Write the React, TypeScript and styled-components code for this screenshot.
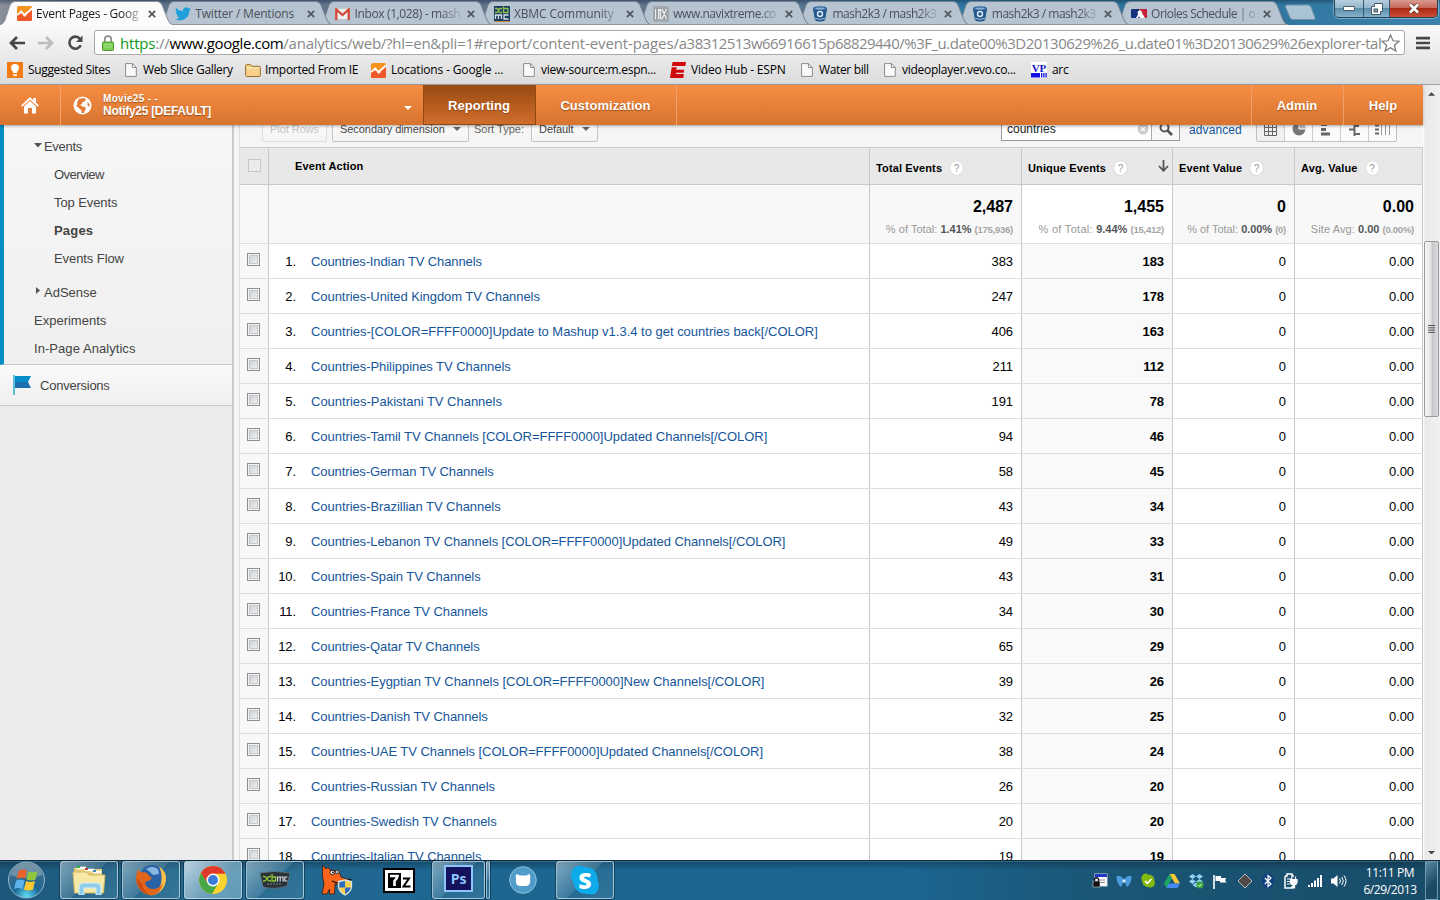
import React from "react";
import styled, { createGlobalStyle, css } from "styled-components";

const ui = `"Open Sans", "Noto Sans", sans-serif`;
const arial = `"Liberation Sans", Arial, sans-serif`;

const GlobalStyle = createGlobalStyle`
  * { box-sizing: border-box; }
  body { margin: 0; overflow: hidden; font-family: ${arial}; font-size: 13px; color: #000; }
  svg { display: block; flex: none; }
`;

const Desktop = styled.div`
  width: 1440px;
  height: 900px;
  display: flex;
  flex-direction: column;
  overflow: hidden;
  background: #fff;
`;

/* ---------- browser frame ---------- */

const TitleBar = styled.header`
  height: 25px;
  display: flex;
  flex: none;
  background:
    linear-gradient(180deg, rgba(20, 40, 70, 0.45), rgba(20, 40, 70, 0) 5px),
    linear-gradient(90deg, #8a8f99 0, #60748c 60px, #60748c 780px, #2f7aa5 900px, #2a729c 1200px, #3b83ab 1440px);
`;

const TabBox = styled.div<{ $z: number; $active?: boolean }>`
  position: relative;
  z-index: ${(p) => p.$z};
  width: 159.3px;
  flex: none;
  display: flex;
  align-items: center;
  padding: 2px 0 0 16px;
  color: ${(p) => (p.$active ? "#1a1a1a" : "#4a5058")};
`;

const TabShape = styled.svg`
  position: absolute;
  left: 0;
  top: 0;
`;

const TabIcon = styled.span`
  position: relative;
  width: 16px;
  display: flex;
  justify-content: center;
`;

const TabLabel = styled.span<{ $ls?: number; $fade?: boolean }>`
  position: relative;
  width: 107px;
  margin-left: 4px;
  overflow: hidden;
  white-space: nowrap;
  font: 12px/18px ${ui};
  letter-spacing: ${(p) => p.$ls ?? -0.2}px;
  ${(p) => p.$fade && css`mask-image: linear-gradient(90deg, #000 86px, rgba(0, 0, 0, 0.2) 105px);`}
`;

const CloseMark = styled.svg`
  position: relative;
  margin-left: 5px;
`;

const NewTab = styled.svg`
  margin: 4px 0 0 10px;
`;

const WindowButtons = styled.div`
  display: flex;
  width: 104px;
  height: 18px;
  margin-left: auto;
  margin-right: 2px;
  border: 1px solid #22415a;
  border-top: 0;
  border-radius: 0 0 5px 5px;
  overflow: hidden;
  box-shadow: 0 0 0 1px rgba(255, 255, 255, 0.35);
`;

const WindowButton = styled.div<{ $w: number; $close?: boolean }>`
  width: ${(p) => p.$w}px;
  display: flex;
  align-items: center;
  justify-content: center;
  padding-top: ${(p) => (p.$close ? 0 : 1)}px;
  padding-bottom: 1px;
  border-right: ${(p) => (p.$close ? "0" : "1px solid #35566e")};
  background: ${(p) =>
    p.$close
      ? "linear-gradient(180deg, #d89a90 0, #c8685a 45%, #ab2a17 50%, #cc4f35 100%)"
      : "linear-gradient(180deg, #b6cfdf 0, #94b7cd 45%, #5a8dac 50%, #86b3cc 100%)"};
`;

const Chrome = styled.div`
  flex: none;
  height: 60px;
  border-bottom: 1px solid #a2a2a2;
  background: linear-gradient(180deg, #fafafa 0, #ebebeb 28px, #dcdcdc 100%);
`;

const AddressRow = styled.div`
  display: flex;
  align-items: center;
  height: 35px;
  padding: 0 9px;
`;

const BackIcon = styled.svg`
  margin-right: 13px;
`;

const AddressBox = styled.div`
  display: flex;
  align-items: center;
  width: 1311px;
  height: 25px;
  margin: 0 11px 0 10px;
  padding: 0 4px 0 7px;
  border: 1px solid #a9a9a9;
  border-radius: 3px;
  background: #fff;
`;

const Url = styled.div`
  flex: 1;
  margin-left: 6px;
  overflow: hidden;
  white-space: nowrap;
  font: 15px/22px ${ui};
  color: #888;
`;

const UrlPart = styled.span<{ $c?: string; $ls: number }>`
  color: ${(p) => p.$c ?? "#888"};
  letter-spacing: ${(p) => p.$ls}px;
`;

const BookmarkRow = styled.nav`
  display: flex;
  height: 24px;
  padding: 0 0 4px 7px;
  font: 12px/20px ${ui};
`;

const BookmarkBox = styled.div<{ $w: number; $ls: number }>`
  display: flex;
  align-items: center;
  width: ${(p) => p.$w}px;
  white-space: nowrap;
  letter-spacing: ${(p) => p.$ls}px;
`;

const BookmarkIcon = styled.span<{ $w: number }>`
  width: ${(p) => p.$w}px;
  flex: none;
`;

/* ---------- page ---------- */

const Viewport = styled.div`
  display: flex;
  flex: none;
  height: 775px;
`;

const Page = styled.div`
  width: 1423px;
  display: flex;
  flex-direction: column;
`;

const TopBar = styled.div`
  position: relative;
  z-index: 2;
  display: flex;
  flex: none;
  height: 40px;
  color: #fff;
  font-weight: bold;
  text-shadow: 0 1px 1px rgba(120, 60, 10, 0.7);
  background: linear-gradient(180deg, #f68d42, #d87430);
  box-shadow: 0 1px 3px rgba(0, 0, 0, 0.35);
`;

const HomeCell = styled.div`
  width: 61px;
  display: flex;
  align-items: center;
  justify-content: center;
  border-right: 1px solid #f4a56c;
`;

const AccountCell = styled.div`
  width: 362px;
  display: flex;
  align-items: center;
  padding: 0 11px 0 12px;
`;

const AccountName = styled.div`
  margin: 0 auto 0 11px;
  font-size: 12px;
  line-height: 13px;
  letter-spacing: -0.28px;
  small {
    display: block;
    font-size: 10px;
    letter-spacing: 0.3px;
    line-height: 12px;
  }
`;

const CaretSlot = styled.span`
  margin-top: 5px;
`;

const TopLink = styled.div<{ $w: number; $active?: boolean; $left?: boolean }>`
  width: ${(p) => p.$w}px;
  display: flex;
  align-items: center;
  justify-content: center;
  padding-right: 1px;
  font-size: 13px;
  letter-spacing: 0.05px;
  border-right: 1px solid #efa066;
  ${(p) => p.$left && css`
    margin-left: auto;
    border-left: 1px solid #efa066;
  `}
  ${(p) => p.$active && css`
    padding-top: 1px;
    border: 1px solid #914810;
    border-top: 0;
    background: linear-gradient(180deg, #984a12, #d06d2c);
  `}
  &:last-child { border-right: 0; }
`;

const Body = styled.div`
  display: flex;
  flex: 1;
  min-height: 0;
  overflow: hidden;
  background: #f5f5f5;
`;

const Sidebar = styled.aside`
  width: 234px;
  flex: none;
  background: #ececec;
  border-right: 2px solid #cbcbcb;
  color: #444;
`;

const NavGroup = styled.div`
  height: 240px;
  padding: 7px 0 0 29px;
  border-left: 4px solid #058dc7;
  border-bottom: 1px solid #c9c9c9;
  background: linear-gradient(180deg, #f6f6f6, #f0f0f0);
`;

const NavItem = styled.div<{ $depth?: number; $bold?: boolean; $gap?: boolean; $ls?: number }>`
  display: flex;
  align-items: center;
  height: 28px;
  margin-top: ${(p) => (p.$gap ? 6 : 0)}px;
  padding-left: ${(p) => (p.$depth ?? 0) * 20 + 1}px;
  font-weight: ${(p) => (p.$bold ? "bold" : "normal")};
  letter-spacing: ${(p) => p.$ls ?? 0}px;
`;

const Twisty = styled.svg`
  margin: -2px 2px 0 0;
`;

const Conversions = styled.div`
  display: flex;
  align-items: center;
  gap: 9px;
  height: 41px;
  padding-left: 13px;
  border-bottom: 1px solid #cbcbcb;
  letter-spacing: -0.24px;
  background: linear-gradient(180deg, #fafafa, #f0f0f0);
`;

const Report = styled.main`
  width: 1184px;
  margin-left: 5px;
  flex: none;
  border-left: 1px solid #dcdcdc;
`;

const Controls = styled.div`
  display: flex;
  align-items: flex-end;
  height: 22px;
  padding: 0 26px 5px 22px;
  overflow: hidden;
  background: #f5f5f5;
  font-size: 11px;
  color: #444;
`;

const ControlButton = styled.div<{ $w: number; $disabled?: boolean }>`
  display: flex;
  align-items: center;
  justify-content: space-between;
  width: ${(p) => p.$w}px;
  height: 26px;
  flex: none;
  margin-right: 5px;
  padding: 0 7px 1px;
  white-space: nowrap;
  border: 1px solid ${(p) => (p.$disabled ? "#ddd" : "#c4c4c4")};
  border-radius: 2px;
  color: ${(p) => (p.$disabled ? "#c4c4c4" : "#444")};
  background: linear-gradient(180deg, #fff, #f3f3f3);
  letter-spacing: -0.05px;
`;

const SortLabel = styled.span`
  width: 57px;
  flex: none;
  padding: 0 0 7px 0;
  white-space: nowrap;
  color: #666;
  letter-spacing: 0;
`;

const SearchBox = styled.div`
  display: flex;
  align-items: center;
  justify-content: space-between;
  width: 151px;
  height: 24px;
  margin: 0 0 1px auto;
  padding: 0 2px 1px 5px;
  border: 1px solid #999;
  background: #fff;
  color: #222;
  font-size: 12px;
`;

const SearchButton = styled.div`
  display: flex;
  align-items: center;
  justify-content: center;
  width: 29px;
  height: 24px;
  margin-bottom: 1px;
  margin-left: -1px;
  border: 1px solid #999;
  border-left-color: #aaa;
  background: #f8f8f8;
`;

const Advanced = styled.a`
  width: 76px;
  flex: none;
  padding: 0 0 5px 9px;
  color: #15569b;
  font-size: 12px;
  letter-spacing: 0.1px;
`;

const ViewSwitch = styled.div`
  display: flex;
  width: 141px;
  height: 26px;
  flex: none;
  border: 1px solid #c0c0c0;
  border-radius: 2px;
  background: #fbfbfb;
`;

const ViewOption = styled.div<{ $on?: boolean }>`
  flex: 1;
  display: flex;
  align-items: center;
  justify-content: center;
  border-right: 1px solid #ccc;
  background: ${(p) => (p.$on ? "#f0f0f0" : "transparent")};
  &:last-child { border-right: 0; }
`;

const columns = "29px 601px 152px 151px 122px 128px";

const HeadRow = styled.div`
  display: grid;
  grid-template-columns: ${columns};
  height: 38px;
  border-top: 1px solid #c9c9c9;
  border-bottom: 1px solid #c9c9c9;
  background: #e8e8e8;
  font-size: 11px;
  font-weight: bold;
`;

const HeadCell = styled.div<{ $lead?: boolean }>`
  display: flex;
  align-items: center;
  padding: ${(p) => (p.$lead ? "0 0 1px 26px" : "4px 3px 0 6px")};
  border-right: 1px solid #c9c9c9;
  letter-spacing: 0.13px;
  white-space: nowrap;
`;

const HelpBadge = styled.span`
  display: flex;
  align-items: center;
  justify-content: center;
  width: 13px;
  height: 14px;
  margin-left: 8px;
  border-radius: 50%;
  background: #fff;
  box-shadow: 0 0 1px #aaa;
  color: #999;
  font-size: 10px;
  font-weight: normal;
`;

const SortArrow = styled.svg`
  margin-left: auto;
  margin-top: -4px;
`;

const TotalsRow = styled.div`
  display: grid;
  grid-template-columns: ${columns};
  height: 59px;
  border-bottom: 1px solid #dedede;
  background: #f8f8f8;
`;

const TotalCell = styled.div<{ $sorted?: boolean }>`
  padding: 11px 8px 0 0;
  border-right: 1px solid #c9c9c9;
  background: ${(p) => (p.$sorted ? "#fff" : "transparent")};
  text-align: right;
  white-space: nowrap;
`;

const TotalValue = styled.div`
  font-size: 16px;
  line-height: 22px;
  font-weight: bold;
`;

const TotalNote = styled.div<{ $ls?: number }>`
  margin-top: 1px;
  font-size: 11px;
  line-height: 20px;
  letter-spacing: ${(p) => p.$ls ?? 0.04}px;
  color: #999;
  b { color: #555; letter-spacing: -0.05px; }
  small { font-size: 9.5px; font-weight: bold; color: #a5a5a5; letter-spacing: -0.25px; }
`;

const DataRow = styled.div`
  display: grid;
  grid-template-columns: ${columns};
  height: 35px;
  border-bottom: 1px solid #dedede;
  background: #fff;
`;

const CheckCell = styled.div<{ $head?: boolean }>`
  display: flex;
  justify-content: center;
  align-items: center;
  padding-bottom: ${(p) => (p.$head ? 1 : 3)}px;
  padding-right: ${(p) => (p.$head ? 0 : 1)}px;
  border-right: 1px solid #c9c9c9;
  background: ${(p) => (p.$head ? "transparent" : "#f8f8f8")};
`;

const CheckBox = styled.span<{ $flat?: boolean }>`
  width: 13px;
  height: 13px;
  border: 1px solid ${(p) => (p.$flat ? "#c8c8c8" : "#8e8f8f")};
  background: ${(p) => (p.$flat ? "#ebebeb" : "linear-gradient(135deg, #c6cacf, #f6f6f6)")};
  box-shadow: ${(p) => (p.$flat ? "none" : "inset 0 0 0 1px #f4f4f4, inset 0 0 0 2px #c3c6ca")};
`;

const NameCell = styled.div`
  display: flex;
  align-items: center;
  padding-top: 1px;
  border-right: 1px solid #c9c9c9;
  letter-spacing: -0.1px;
  white-space: nowrap;
`;

const Rank = styled.span`
  width: 27px;
  text-align: right;
`;

const EventLink = styled.a<{ $ls: number }>`
  margin-left: 15px;
  color: #15569b;
  letter-spacing: ${(p) => p.$ls}px;
`;

const NumCell = styled.div<{ $sorted?: boolean }>`
  display: flex;
  align-items: center;
  justify-content: flex-end;
  padding: 1px 8px 0 0;
  border-right: 1px solid #c9c9c9;
  background: ${(p) => (p.$sorted ? "#f9f9f9" : "#fff")};
  font-weight: ${(p) => (p.$sorted ? "bold" : "normal")};
  letter-spacing: -0.1px;
`;

const ScrollTrack = styled.div`
  width: 17px;
  display: flex;
  flex-direction: column;
  align-items: center;
  background: linear-gradient(90deg, #fff 0, #e9e9e9 2px, #f1f1f1 100%);
`;

const TrackSpace = styled.div<{ $h: number }>`
  height: ${(p) => p.$h}px;
  display: flex;
  flex-direction: column;
  justify-content: space-between;
  padding: 7px 0 6px;
`;

const Thumb = styled.div`
  width: 15px;
  height: 176px;
  flex: none;
  display: flex;
  align-items: center;
  justify-content: center;
  border: 1px solid #9a9a9a;
  border-radius: 2px;
  background: linear-gradient(90deg, #f6f6f6, #e4e4e6 45%, #c6c7cb 55%, #dcdcdf);
`;

/* ---------- taskbar ---------- */

const Taskbar = styled.footer`
  display: flex;
  flex: none;
  height: 40px;
  padding-left: 6px;
  border-top: 1px solid #0e2b3d;
  background:
    linear-gradient(180deg, rgba(150, 190, 215, 0.45) 0, rgba(10, 35, 55, 0.4) 1px, rgba(10, 35, 55, 0) 9px),
    linear-gradient(90deg, #1d5779 0, #256a90 200px, #1d6690 420px, #1b6691 900px, #1b5777 1080px, #184c69 1440px);
`;

const TaskSlot = styled.div<{ $w: number; $ml?: number; $lift?: number; $mode?: "open" | "active" }>`
  display: flex;
  align-items: center;
  justify-content: center;
  width: ${(p) => p.$w}px;
  height: 38px;
  margin-left: ${(p) => p.$ml ?? 0}px;
  padding-bottom: ${(p) => p.$lift ?? 0}px;
  flex: none;
  ${(p) => p.$mode && css`
    border: 1px solid rgba(190, 218, 232, 0.75);
    border-radius: 3px;
    box-shadow: 0 0 0 1px rgba(10, 35, 55, 0.55);
    background: ${p.$mode === "active"
      ? "linear-gradient(135deg, rgba(225,238,245,.8), rgba(150,190,210,.65) 55%, rgba(120,175,200,.7))"
      : "linear-gradient(135deg, rgba(190,212,225,.6), rgba(110,155,180,.4) 50%, rgba(60,120,150,.3) 51%, rgba(80,140,170,.4))"};
  `}
`;

const Tray = styled.div`
  display: flex;
  align-items: center;
  width: 255px;
  margin-left: auto;
  justify-content: space-between;
  padding-top: 1px;
`;

const Clock = styled.div`
  width: 62px;
  margin: 3px 4px 0 12px;
  color: #fff;
  font: 12px/17px ${ui};
  letter-spacing: -0.4px;
  text-align: center;
  white-space: nowrap;
`;

const ShowDesktop = styled.div`
  width: 13px;
  margin-right: 2px;
  border: 1px solid rgba(160, 200, 220, 0.6);
  border-radius: 1px;
  background: linear-gradient(135deg, #5a8aa5, #1b4a66 60%);
`;

/* ---------- icons ---------- */

const AnalyticsIcon = () => (
  <svg width="15" height="15" viewBox="0 0 15 15">
    <rect width="15" height="15" rx="1.5" fill="#f6931e" />
    <path d="M0 9.5 4 6.5 7.5 10 15 3.5V13.5A1.5 1.5 0 0 1 13.5 15H1.5A1.5 1.5 0 0 1 0 13.5Z" fill="#f0592a" />
    <path d="M0 9 4.3 5.8 7.6 9 15 2.5" fill="none" stroke="#fff" strokeWidth="1.7" />
    <circle cx="4.2" cy="6" r="1.6" fill="#fff" />
    <circle cx="7.8" cy="9" r="1.6" fill="#fff" />
  </svg>
);

const TwitterIcon = () => (
  <svg width="16" height="14" viewBox="0 0 24 20">
    <path fill="#1e9fdb" d="M24 2.4a9.800 9.800 0 0 1-2.800.8A4.900 4.900 0 0 0 23.300.4a9.900 9.900 0 0 1-3.100 1.200A4.900 4.900 0 0 0 11.800 6 14 14 0 0 1 1.700.9a4.900 4.900 0 0 0 1.500 6.600A4.900 4.900 0 0 1 1 6.900a4.900 4.900 0 0 0 3.900 4.900 5 5 0 0 1-2.200.1 4.900 4.900 0 0 0 4.600 3.400A9.900 9.900 0 0 1 0 17.300 14 14 0 0 0 21.500 4.900 10 10 0 0 0 24 2.400z" />
  </svg>
);

const GmailIcon = () => (
  <svg width="15" height="12" viewBox="0 0 15 12">
    <rect x="0.5" y="0.5" width="14" height="11" rx="1" fill="#eee" stroke="#bbb" strokeWidth="0.6" />
    <path d="M1.3 12V1.500L7.500 7l6.200-5.500V12" fill="none" stroke="#d14836" strokeWidth="2.300" />
  </svg>
);

const XbmcFavicon = () => (
  <svg width="16" height="16" viewBox="0 0 16 16">
    <rect width="16" height="16" fill="#1d3d5e" />
    <path d="M1 2.500h1.500q1.500 0 2 2t2 2H8M1 6.500h1.500q1.500 0 2-2t2-2H8M9.500.500v6h4.500v-4H9.500" fill="none" stroke="#8fc153" strokeWidth="1.300" />
    <path d="M1.500 13V9h6v4M4.500 9v4M14.500 9H10v4h4.500" fill="none" stroke="#d5dfe8" strokeWidth="1.300" />
    <rect y="15" width="16" height="1" fill="#c8863b" />
  </svg>
);

const NaviIcon = () => (
  <svg width="16" height="16" viewBox="0 0 16 16">
    <rect width="16" height="16" rx="2" fill="#a4a9ad" />
    <path d="M2.500 13V3M5.500 13V3.500h2V13M9 3l4.500 10M13.500 3 9 13" fill="none" stroke="#83888d" strokeWidth="3" />
    <path d="M2.500 13V3M5.500 13V3.500h2V13M9 3l4.500 10M13.500 3 9 13" fill="none" stroke="#eceff1" strokeWidth="1.500" />
  </svg>
);

const BitbucketIcon = () => (
  <svg width="14" height="16" viewBox="0 0 14 16">
    <path d="M0 2.500 1.700 13q.3 2.500 5.300 2.500T12.300 13L14 2.500Z" fill="#22548c" />
    <ellipse cx="7" cy="2.500" rx="7" ry="2.300" fill="#2c619a" />
    <ellipse cx="7" cy="2.400" rx="4.800" ry="1" fill="#8fb0d0" />
    <circle cx="7" cy="8" r="2.500" fill="none" stroke="#dce8f2" strokeWidth="1.500" />
    <path d="M2 12.300q5 2.200 10 0" stroke="#b4c9de" fill="none" />
  </svg>
);

const MlbIcon = () => (
  <svg width="16" height="9" viewBox="0 0 16 9">
    <rect width="16" height="9" rx="1.300" fill="#16307c" />
    <path d="M8 0h6.700Q16 0 16 1.300v6.400Q16 9 14.700 9H14L9.500 4Z" fill="#c8203c" />
    <path d="M5 9 7 5.500 6.500 3 8.500 1l2 1 .500 2L14 9H9L8 7 7 9Z" fill="#fff" />
  </svg>
);

const BulbIcon = () => (
  <svg width="16" height="16" viewBox="0 0 16 16">
    <rect width="16" height="16" fill="#f37b16" />
    <path d="M8 2a4 4 0 0 0-4 4c0 2 2 2.800 2 5h4c0-2.200 2-3 2-5a4 4 0 0 0-4-4Z" fill="#fff" />
    <rect x="6" y="12" width="4" height="2.200" fill="#fde3c8" />
  </svg>
);

const DocIcon = () => (
  <svg width="12" height="14" viewBox="0 0 12 14">
    <path d="M.6.6h6.900l3.800 3.800v9H.6Z" fill="#fafafa" stroke="#8c8c8c" />
    <path d="M7.400.8v3.700h3.800" fill="none" stroke="#8c8c8c" />
  </svg>
);

const FolderIcon = () => (
  <svg width="16" height="13" viewBox="0 0 16 13">
    <path d="M.6 11.500V1.600Q.6.600 1.600.600H5.500l1.300 1.700h7.500q1 0 1 1v8.200q0 1-1 1H1.600q-1 0-1-1Z" fill="#f8d08b" stroke="#96702f" />
    <path d="M1.500 4h13" stroke="#fff2c4" />
  </svg>
);

const EspnIcon = () => (
  <svg width="16" height="16" viewBox="0 0 16 16">
    <path d="M2.500 0H16l-.6 4H1.900ZM1.700 5.200h5l-.5 2.600h8l-.4 3H6l-.200 1.200h8L13.300 16H0Z" fill="#d00a0a" />
  </svg>
);

const VpIcon = () => (
  <svg width="16" height="16" viewBox="0 0 16 16">
    <rect width="16" height="16" fill="#fff" />
    <text x="8" y="9.500" textAnchor="middle" fontFamily="Liberation Serif" fontWeight="bold" fontSize="11" letterSpacing="0" fill="#1414c8">VP</text>
    <path d="M0 11h9v4.500H0ZM10 11h1.300v4.500H10ZM12.200 11h1.300v4.500h-1.300ZM14.400 11h1.300v4.500h-1.300Z" fill="#1010e0" />
  </svg>
);

const Globe = () => (
  <svg width="19" height="19" viewBox="0 0 19 19">
    <circle cx="9.500" cy="9.500" r="9" fill="#fff" />
    <path d="M6 2.800 11 2 13 3.500 11.500 5.500 9.500 6 9 8 7 9 9.500 10.500 12 11 13 13 11.500 15 11 17 8.500 17 8.500 14.500 6.500 12.500 3 9.500 4.500 8.500 4 6.500ZM14.500 6 16.500 8 16.500 11 14.500 9.500Z" fill="#e37c36" />
  </svg>
);

const House = () => (
  <svg width="18" height="17" viewBox="0 0 18 17">
    <path d="M9 0 18 8.500 16.800 9.800 9 2.700 1.200 9.800 0 8.500 4 4.700ZM12.500 1H15V5.500L12.500 3.200Z" fill="#fff" />
    <path d="M9 4 15 9.600V16.500H11V11H7V16.500H3V9.600Z" fill="#fff" />
  </svg>
);

const Caret = ({ color = "#555", w = 8 }: { color?: string; w?: number }) => (
  <svg width={w} height={w / 2} viewBox="0 0 8 4"><path d="M0 0H8L4 4Z" fill={color} /></svg>
);

const TabShapeView = ({ active }: { active?: boolean }) => (
  <TabShape width="176" height="25" viewBox="0 0 176 25">
    <path
      d="M0 25Q3.500 24 5 20L10 5Q11.500 1.500 15 1.500H157Q160.500 1.500 162 5L168 20Q169.500 24 173 25"
      fill={active ? "#fbfbfb" : "#b6c4d1"}
      stroke={active ? "#8e9299" : "#73818f"}
      strokeWidth="1"
    />
    {!active && <path d="M0 24.500H173" stroke="#8d979f" />}
  </TabShape>
);

const CloseIcon = () => (
  <CloseMark width="8" height="8" viewBox="0 0 8 8">
    <path d="M.8.8 7.200 7.200M7.200.8.8 7.200" stroke="#50565c" strokeWidth="1.700" />
  </CloseMark>
);

const WindowsOrb = () => (
  <svg width="40" height="38" viewBox="0 0 40 38">
    <defs>
      <radialGradient id="orb" cx="50%" cy="95%" r="90%">
        <stop offset="0" stopColor="#5fe0fa" />
        <stop offset=".4" stopColor="#1c6592" />
        <stop offset="1" stopColor="#4b7189" />
      </radialGradient>
    </defs>
    <circle cx="20.500" cy="19" r="18" fill="url(#orb)" stroke="#8fb8cc" strokeWidth="1" />
    <path d="M4.500 14Q8 2 20.500 2T36.500 14Q20 20 4.500 14Z" fill="#fff" opacity=".25" />
    <path d="M12.500 10q4-2.500 8.500-.5L19 17.800q-4-2-8.500.3Z" fill="#e8622a" />
    <path d="M22.500 10.300q4 2 9 0L29.500 18.500q-4.500 2-9 0Z" fill="#8fc63d" />
    <path d="M10 19.800q4-2.300 8.500-.3L16.500 28q-4.500-2-8.500.3Z" fill="#5cb3ea" />
    <path d="M20 20q4.500 2 9 0L27 28.500q-4.500 2-9 0Z" fill="#fcc931" />
  </svg>
);

const ExplorerIcon = () => (
  <svg width="34" height="30" viewBox="0 0 34 30">
    <path d="M2 3 13 1.500 15 4H30V27H2Z" fill="#e8cf7a" />
    <path d="M5 3h9M13 5h9M21 7h8" stroke="#fff" strokeWidth="2.500" />
    <path d="M5 2h3" stroke="#36a63a" strokeWidth="2" />
    <path d="M13 4h3" stroke="#cc3b28" strokeWidth="2" />
    <path d="M21 6h3" stroke="#3a86cf" strokeWidth="2" />
    <path d="M1 7H15L17 10H33L31.500 28H2.500Z" fill="#f7e8a6" stroke="#d3b765" />
    <path d="M7 30V22q0-4 4-4H25q4 0 4 4v8H24V23H12v7Z" fill="#8fcdea" stroke="#d6f0fb" />
  </svg>
);

const FirefoxIcon = () => (
  <svg width="34" height="34" viewBox="0 0 34 34">
    <circle cx="18" cy="14.500" r="12.500" fill="#2a62a8" />
    <path d="M12 6q6-4 12 0l1 5-6 1-3-3Z" fill="#9fcdee" opacity=".8" />
    <path d="M25 3.500q8 5 7 14Q30 30 17 32.500q8-5 10-12 2-9-2-17Z" fill="#f9c04a" />
    <path d="M4 6Q1 14 2.500 20 6 31 17 32.500 27 31 29 20 25 26 19 26 12 25.500 11 20 12 17.500 16 17.500 18 15 17.500 14 14 13 14 11 12 8.500 9 9.500 5 9 4 6Z" fill="#e2661a" />
    <path d="M3 14q-1 13 12 17.500Q8 26 8 20 4 18 3 14Z" fill="#bf3a10" opacity=".65" />
  </svg>
);

const ChromeIcon = () => (
  <svg width="30" height="30" viewBox="0 0 30 30">
    <circle cx="15" cy="15" r="14" fill="#fcd22f" />
    <path d="M2.900 8 9.500 18.500 15 15V8.800L27.500 8.800A14 14 0 0 0 2.900 8Z" fill="#e0392b" />
    <path d="M2.900 8A14 14 0 0 0 14 29l5.500-9.500-10-1.500Z" fill="#48a848" />
    <circle cx="15" cy="15" r="6.500" fill="#fff" />
    <circle cx="15" cy="15" r="5" fill="#3a7cd8" />
  </svg>
);

const XbmcIcon = () => (
  <svg width="32" height="18" viewBox="0 0 32 18">
    <path d="M1 2Q16-1 31 2L28 15Q16 19 4 16Z" fill="#2b3238" stroke="#6a7882" strokeWidth=".7" />
    <path d="M4 5.500h1q2 0 3 2.200T11 10h1M4 10h1q2 0 3-2.300T11 5.500h1M13 3V10h3.500V6H13" stroke="#8fc93a" fill="none" strokeWidth="1.300" />
    <path d="M18.500 10.500V6H24v4.500M21.200 6v4.500M28.500 6h-2.700v4h2.700" stroke="#d8dde0" fill="none" strokeWidth="1.200" />
    <path d="M8 13h14" stroke="#7b868d" strokeDasharray="2 1" />
  </svg>
);

const FoxIcon = () => (
  <svg width="34" height="34" viewBox="0 0 34 34">
    <path d="M2 31 4 21 2.500 13 2.500 2 6 6 8 4 10 7 19 8 21 14 29 17 29 20 20 22 15 21 14.500 31H9.500L9.500 26 7 31Z" fill="#f9641a" stroke="#2a1006" strokeWidth=".7" />
    <ellipse cx="12.500" cy="9.500" rx="2.500" ry="2.100" fill="#fff" stroke="#111" strokeWidth=".8" />
    <ellipse cx="17.500" cy="9" rx="2" ry="1.900" fill="#fff" stroke="#111" strokeWidth=".8" />
    <circle cx="13" cy="9.500" r=".9" />
    <circle cx="17.800" cy="9" r=".8" />
    <path d="M12 18q7 4 17 .5" stroke="#111" fill="none" strokeWidth="1.300" />
    <circle cx="30" cy="17" r="1.600" fill="#111" />
    <path d="M18.500 18.500 25 17 31.500 18.500V24Q30.500 29.500 25 32 19.500 29.500 18.500 24Z" fill="#f6d34b" stroke="#d9dfe5" strokeWidth="1.300" />
    <path d="M19.300 19.300 25 18V24.500H19.300ZM25 24.500H30.700Q29.500 29 25 31Z" fill="#2a6cc8" />
  </svg>
);

const SevenZip = () => (
  <svg width="32" height="25" viewBox="0 0 32 25">
    <rect x="1" y="1" width="30" height="23" fill="#fff" stroke="#000" strokeWidth="2" />
    <rect x="5" y="5" width="13" height="15" fill="#000" />
    <path d="M7 8H14.500Q14 11 11.500 13V18" stroke="#fff" strokeWidth="2.600" fill="none" />
    <path d="M20 10.500H26L20.500 18.500H27.500" stroke="#000" strokeWidth="2" fill="none" />
  </svg>
);

const PhotoshopIcon = () => (
  <svg width="29" height="27" viewBox="0 0 29 27">
    <rect x="1" y="1" width="27" height="25" fill="#14125c" stroke="#8fc3fb" strokeWidth="2" />
    <text x="14.500" y="18.500" textAnchor="middle" fontFamily="Open Sans" fontWeight="700" fontSize="14" fill="#8fc3fb">Ps</text>
  </svg>
);

const GithubIcon = () => (
  <svg width="28" height="28" viewBox="0 0 28 28">
    <circle cx="14" cy="14" r="13.300" fill="#4f9dc8" stroke="#8cc0dc" />
    <path d="M7.500 8 11 9.500H17L20.500 8Q22 11 21 13 22 19 17.500 20H10.500Q6 19 7 13 6 11 7.500 8Z" fill="#fff" />
  </svg>
);

const SkypeIcon = () => (
  <svg width="30" height="31" viewBox="0 0 30 31">
    <path d="M8 1Q11 0 14 2 28 2 27.500 16 30 20 28 25 25 31 19 29 5 30 3 16 0 13 1.500 7 3 2 8 1Z" fill="#0eabeb" />
    <text x="15" y="23.500" textAnchor="middle" fontFamily="Open Sans" fontWeight="800" fontSize="23" fill="#fff">S</text>
  </svg>
);

/* ---------- data ---------- */

const tabs: { icon: React.ReactNode; label: string; ls: number; fade?: boolean }[] = [
  { icon: <AnalyticsIcon />, label: "Event Pages - Goog", ls: -0.25, fade: true },
  { icon: <TwitterIcon />, label: "Twitter / Mentions", ls: -0.2 },
  { icon: <GmailIcon />, label: "Inbox (1,028) - mash", ls: -0.38, fade: true },
  { icon: <XbmcFavicon />, label: "XBMC Community", ls: -0.1, fade: true },
  { icon: <NaviIcon />, label: "www.navixtreme.co", ls: -0.45, fade: true },
  { icon: <BitbucketIcon />, label: "mash2k3 / mash2k3", ls: -0.5, fade: true },
  { icon: <BitbucketIcon />, label: "mash2k3 / mash2k3", ls: -0.5, fade: true },
  { icon: <MlbIcon />, label: "Orioles Schedule | o", ls: -0.5, fade: true },
];

const bookmarks: { icon: React.ReactNode; label: string; w: number; iw: number; ls: number }[] = [
  { icon: <BulbIcon />, label: "Suggested Sites", w: 118, iw: 21, ls: -0.35 },
  { icon: <DocIcon />, label: "Web Slice Gallery", w: 120, iw: 18, ls: -0.35 },
  { icon: <FolderIcon />, label: "Imported From IE", w: 126, iw: 20, ls: -0.3 },
  { icon: <AnalyticsIcon />, label: "Locations - Google ...", w: 152, iw: 20, ls: -0.15 },
  { icon: <DocIcon />, label: "view-source:m.espn...", w: 147, iw: 18, ls: -0.27 },
  { icon: <EspnIcon />, label: "Video Hub - ESPN", w: 131, iw: 21, ls: -0.2 },
  { icon: <DocIcon />, label: "Water bill", w: 83, iw: 18, ls: -0.35 },
  { icon: <DocIcon />, label: "videoplayer.vevo.co...", w: 147, iw: 18, ls: -0.27 },
  { icon: <VpIcon />, label: "arc", w: 60, iw: 21, ls: -0.3 },
];

/* name, total events, unique events, letter spacing of the name */
const rows: [string, number, number, number][] = [
  ["Countries-Indian TV Channels", 383, 183, -0.11],
  ["Countries-United Kingdom TV Channels", 247, 178, -0.06],
  ["Countries-[COLOR=FFFF0000]Update to Mashup v1.3.4 to get countries back[/COLOR]", 406, 163, -0.01],
  ["Countries-Philippines TV Channels", 211, 112, -0.05],
  ["Countries-Pakistani TV Channels", 191, 78, -0.01],
  ["Countries-Tamil TV Channels [COLOR=FFFF0000]Updated Channels[/COLOR]", 94, 46, -0.04],
  ["Countries-German TV Channels", 58, 45, -0.1],
  ["Countries-Brazillian TV Channels", 43, 34, -0.05],
  ["Countries-Lebanon TV Channels [COLOR=FFFF0000]Updated Channels[/COLOR]", 49, 33, -0.07],
  ["Countries-Spain TV Channels", 43, 31, -0.08],
  ["Countries-France TV Channels", 34, 30, -0.08],
  ["Countries-Qatar TV Channels", 65, 29, -0.09],
  ["Countries-Eygptian TV Channels [COLOR=FFFF0000]New Channels[/COLOR]", 39, 26, -0.04],
  ["Countries-Danish TV Channels", 32, 25, -0.08],
  ["Countries-UAE TV Channels [COLOR=FFFF0000]Updated Channels[/COLOR]", 38, 24, -0.05],
  ["Countries-Russian TV Channels", 26, 20, -0.05],
  ["Countries-Swedish TV Channels", 20, 20, -0.07],
  ["Countries-Italian TV Channels", 19, 19, -0.1],
];

const TrayIcons = () => (
  <Tray>
    <svg width="16" height="16" viewBox="0 0 16 16">
      <rect x="3" y="1" width="12" height="12" fill="#fff" stroke="#dde" />
      <rect x="3" y="1" width="12" height="3" fill="#2338c8" />
      <path d="M6 7h7M6 9.500h7" stroke="#888" />
      <rect x="1" y="8" width="7" height="6" fill="#111" stroke="#ccc" strokeWidth=".6" />
      <path d="M2.500 8V6q2-2.500 4 0v2" stroke="#111" fill="none" strokeWidth="1.300" />
    </svg>
    <svg width="16" height="14" viewBox="0 0 16 14">
      <path d="M.5 2Q6 1 8 6.500 10 1 15.500 2 16 9 11 13 9.500 11 9 8L8 7 7 8Q6.500 11 5 13 0 9 .5 2Z" fill="#4a9be0" />
      <circle cx="8" cy="7" r="1.800" fill="#cfe4f4" />
    </svg>
    <svg width="16" height="16" viewBox="0 0 16 16">
      <path d="M4 1Q6 0 8 1.500q6.500 0 6.500 6.500 1 3-.5 5-2 2-5 1.200Q2.500 14 2 8 0 3 4 1Z" fill="#83b90c" />
      <path d="m5 8 2.300 2.300L11.500 6" stroke="#fff" strokeWidth="1.700" fill="none" />
    </svg>
    <svg width="16" height="14" viewBox="0 0 16 14">
      <path d="M5.500 0h5L16 9.500H11Z" fill="#fcc934" />
      <path d="M5.500 0 8 4.500 2.500 14 0 9.500Z" fill="#1fa463" />
      <path d="M5 9.500H16L13.500 14h-11Z" fill="#4688f4" />
    </svg>
    <svg width="16" height="16" viewBox="0 0 16 16">
      <path d="m4.500 1 3.500 2.500L4.500 6 1 3.500ZM11.500 1 15 3.500 11.500 6 8 3.500ZM4.500 6 8 8.500 4.500 11 1 8.500ZM11.500 6 15 8.500 11.500 11 8 8.500ZM8 9.500l3.500 2.500L8 14.500 4.500 12Z" fill="#8fd0f5" />
      <circle cx="12" cy="12" r="3.500" fill="#35a535" />
      <path d="m10.300 12 1.300 1.300 2.200-2.500" stroke="#fff" fill="none" />
    </svg>
    <svg width="16" height="15" viewBox="0 0 16 15">
      <path d="M2 1V15" stroke="#fff" strokeWidth="1.600" />
      <path d="M3.500 2H9V4H14.500L13 6l1.500 2.500H8V7H3.500Z" fill="#fff" />
    </svg>
    <svg width="16" height="16" viewBox="0 0 16 16">
      <path d="M8 1 15 8 8 15 1 8Z" fill="#4f4a4a" stroke="#b8b8b8" />
    </svg>
    <svg width="14" height="16" viewBox="0 0 14 16">
      <ellipse cx="7" cy="8" rx="5.800" ry="7.800" fill="#123f80" />
      <path d="M3.800 5 10 11 7 13.500V2.500L10 5 3.800 11" stroke="#fff" strokeWidth="1.200" fill="none" />
    </svg>
    <svg width="16" height="16" viewBox="0 0 16 16">
      <path d="M2 3h2V1h5v2H11M2 3V15H9V13" fill="none" stroke="#fff" strokeWidth="1.500" />
      <path d="M4 6h4M4 8.500h3M4 11h3" stroke="#fff" />
      <path d="M7.500 6.500H14V9Q14 11.500 11.500 11.800V15H10V11.800Q7.500 11.500 7.500 9ZM8.800 3.500v3M12.500 3.500v3" fill="#fff" stroke="#fff" strokeWidth="1.200" />
    </svg>
    <svg width="16" height="12" viewBox="0 0 16 12">
      <path d="M1 12V10H3V12ZM4 12V8H6V12ZM7 12V5.500H9V12ZM10 12V3H12V12ZM13 12V0H15V12Z" fill="#fff" />
    </svg>
    <svg width="16" height="14" viewBox="0 0 16 14">
      <path d="M0 4.500H2.500L6.500 1V13L2.500 9.500H0Z" fill="#fff" />
      <path d="M8.500 4.500q1.800 2.500 0 5M10.800 3q3 4 0 8M13 1.500q4 5.500 0 11" stroke="#fff" fill="none" />
    </svg>
  </Tray>
);

export default function App() {
  return (
    <Desktop>
      <GlobalStyle />
      <TitleBar>
        {tabs.map((t, i) => (
          <TabBox key={i} $z={10 - i} $active={i === 0}>
            <TabShapeView active={i === 0} />
            <TabIcon>{t.icon}</TabIcon>
            <TabLabel $ls={t.ls} $fade={t.fade}>{t.label}</TabLabel>
            <CloseIcon />
          </TabBox>
        ))}
        <NewTab width="33" height="17" viewBox="0 0 33 17">
          <path d="M1.500 3Q1 1 3 1H24Q26 1 27 3L31 13.500Q31.500 15.500 29 15.500H9Q7 15.500 6 13.500Z" fill="#a9c3d4" stroke="#6d93ad" />
        </NewTab>
        <WindowButtons>
          <WindowButton $w={29}>
            <svg width="12" height="5" viewBox="0 0 12 5"><rect x=".5" y=".5" width="11" height="4" rx=".5" fill="#fff" stroke="#4a5b68" /></svg>
          </WindowButton>
          <WindowButton $w={27}>
            <svg width="12" height="12" viewBox="0 0 12 12">
              <path d="M3.500.5h8v8h-2v3h-9v-8h3Z" fill="#fff" stroke="#4a5b68" />
              <rect x="3" y="6" width="3.500" height="3" fill="#7fa5bc" stroke="#4a5b68" />
            </svg>
          </WindowButton>
          <WindowButton $w={47} $close>
            <svg width="12" height="11" viewBox="0 0 12 11">
              <path d="M2 1.500 10 9.500M10 1.500 2 9.500" stroke="#5b3a3a" strokeWidth="4" />
              <path d="M2 1.500 10 9.500M10 1.500 2 9.500" stroke="#fff" strokeWidth="2.500" />
            </svg>
          </WindowButton>
        </WindowButtons>
      </TitleBar>

      <Chrome>
        <AddressRow>
          <BackIcon width="16" height="14" viewBox="0 0 16 14">
            <path d="M8 1 2 7l6 6M2.500 7H16" stroke="#454545" strokeWidth="2.700" fill="none" />
          </BackIcon>
          <BackIcon width="16" height="14" viewBox="0 0 16 14">
            <path d="m8 1 6 6-6 6M13.500 7H0" stroke="#bdbdbd" strokeWidth="2.700" fill="none" />
          </BackIcon>
          <svg width="17" height="16" viewBox="0 0 17 16">
            <path d="M13 3.800A6 6 0 1 0 13.800 10.300" stroke="#4a4a4a" strokeWidth="2.600" fill="none" />
            <path d="M15.500.5V7H9Z" fill="#4a4a4a" />
          </svg>
          <AddressBox>
            <svg width="12" height="16" viewBox="0 0 12 16">
              <path d="M2.800 8V4.200q0-3 3.200-3t3.200 3V8" fill="none" stroke="#8c8c8c" strokeWidth="1.700" />
              <rect x=".5" y="7" width="11" height="8.500" rx=".8" fill="#7dcf58" stroke="#4a9a2a" />
              <path d="M2 9.500h8M2 12h8" stroke="#a5e285" />
            </svg>
            <Url>
              <UrlPart $c="#0b9a17" $ls={-0.2}>https</UrlPart>
              <UrlPart $ls={-0.2}>://</UrlPart>
              <UrlPart $c="#000" $ls={-0.4}>www.google.com</UrlPart>
              <UrlPart $ls={-0.24}>/analytics/web/?hl=en&amp;pli=1</UrlPart>
              <UrlPart $ls={-0.12}>#report/content-event-pages/</UrlPart>
              <UrlPart $ls={-0.54}>a38312513w66916615p68829440</UrlPart>
              <UrlPart $ls={-0.48}>/%3F_u.date00%3D20130629%26_u.date01%3D20130629%26explorer-tal</UrlPart>
            </Url>
            <svg width="19" height="18" viewBox="0 0 19 18">
              <path d="M9.500 1 12 6.800 18 7.200 13.400 11.200 14.900 17 9.500 13.800 4.100 17 5.600 11.200 1 7.200 7 6.800Z" fill="#fff" stroke="#777" strokeWidth="1.200" />
            </svg>
          </AddressBox>
          <svg width="14" height="14" viewBox="0 0 14 14">
            <path d="M.8 2.200H13.200M.8 7H13.200M.8 11.800H13.200" stroke="#484848" strokeWidth="2.700" strokeLinecap="round" />
          </svg>
        </AddressRow>
        <BookmarkRow>
          {bookmarks.map((b) => (
            <BookmarkBox key={b.label} $w={b.w} $ls={b.ls}>
              <BookmarkIcon $w={b.iw}>{b.icon}</BookmarkIcon>
              {b.label}
            </BookmarkBox>
          ))}
        </BookmarkRow>
      </Chrome>

      <Viewport>
        <Page>
          <TopBar>
            <HomeCell><House /></HomeCell>
            <AccountCell>
              <Globe />
              <AccountName>
                <small>Movie25 - -</small>
                Notify25 [DEFAULT]
              </AccountName>
              <CaretSlot><Caret color="#fff" /></CaretSlot>
            </AccountCell>
            <TopLink $w={113} $active>Reporting</TopLink>
            <TopLink $w={141}>Customization</TopLink>
            <TopLink $w={93} $left>Admin</TopLink>
            <TopLink $w={79}>Help</TopLink>
          </TopBar>
          <Body>
            <Sidebar>
              <NavGroup>
                <NavItem $ls={-0.3}>
                  <Twisty width="8" height="5" viewBox="0 0 8 5"><path d="M0 0H8L4 4.500Z" fill="#555" /></Twisty>
                  Events
                </NavItem>
                <NavItem $depth={1} $ls={-0.55}>Overview</NavItem>
                <NavItem $depth={1} $ls={-0.1}>Top Events</NavItem>
                <NavItem $depth={1} $bold $ls={0.2}>Pages</NavItem>
                <NavItem $depth={1} $ls={-0.08}>Events Flow</NavItem>
                <NavItem $gap>
                  <Twisty width="8" height="8" viewBox="0 0 8 8"><path d="M2 0V7L6 3.500Z" fill="#555" /></Twisty>
                  AdSense
                </NavItem>
                <NavItem>Experiments</NavItem>
                <NavItem $ls={0.06}>In-Page Analytics</NavItem>
              </NavGroup>
              <Conversions>
                <svg width="18" height="20" viewBox="0 0 18 20">
                  <rect width="2" height="20" fill="#5bc0de" />
                  <path d="M2 1H18L15 7H2Z" fill="#058dc7" />
                  <path d="M2 7H15L18 13H2Z" fill="#1f6fae" />
                </svg>
                Conversions
              </Conversions>
            </Sidebar>
            <Report>
              <Controls>
                <ControlButton $w={65} $disabled>Plot Rows</ControlButton>
                <ControlButton $w={137}>Secondary dimension <Caret color="#666" /></ControlButton>
                <SortLabel>Sort Type:</SortLabel>
                <ControlButton $w={67}>Default <Caret color="#666" /></ControlButton>
                <SearchBox>
                  countries
                  <svg width="12" height="12" viewBox="0 0 12 12">
                    <circle cx="6" cy="6" r="5.500" fill="#ccc" />
                    <path d="m4 4 4 4M8 4 4 8" stroke="#fff" strokeWidth="1.200" />
                  </svg>
                </SearchBox>
                <SearchButton>
                  <svg width="14" height="14" viewBox="0 0 14 14">
                    <circle cx="5.500" cy="5.500" r="4" fill="none" stroke="#555" strokeWidth="2" />
                    <path d="m8.500 8.500 4.500 4.500" stroke="#555" strokeWidth="2.600" />
                  </svg>
                </SearchButton>
                <Advanced>advanced</Advanced>
                <ViewSwitch>
                  <ViewOption $on>
                    <svg width="13" height="13" viewBox="0 0 13 13"><path d="M.5.5h12v12H.5ZM.5 4.500h12M.5 8.500h12M4.500.5v12M8.500.5v12" fill="none" stroke="#666" /></svg>
                  </ViewOption>
                  <ViewOption>
                    <svg width="14" height="14" viewBox="0 0 14 14"><circle cx="7" cy="7" r="6.500" fill="#777" /><path d="M7 7V.500A6.500 6.500 0 0 1 13.500 7Z" fill="#bbb" /><path d="M7 0V7H14" stroke="#fff" fill="none" /></svg>
                  </ViewOption>
                  <ViewOption>
                    <svg width="12" height="13" viewBox="0 0 12 13"><path d="M0 1.500h6M0 6.500h5M0 11h9" stroke="#666" strokeWidth="3" /></svg>
                  </ViewOption>
                  <ViewOption>
                    <svg width="12" height="13" viewBox="0 0 12 13"><path d="M5.500 0V13M5.500 3H10M0 6.500H5.500M5.500 11H11" stroke="#666" strokeWidth="2" /></svg>
                  </ViewOption>
                  <ViewOption>
                    <svg width="15" height="11" viewBox="0 0 15 11"><path d="M0 1.500h4M0 5.500h4M0 9.500h4" stroke="#666" strokeWidth="2" /><path d="M6.500 0v11M10.500 0v11M14.500 0v11" stroke="#999" /></svg>
                  </ViewOption>
                </ViewSwitch>
              </Controls>
              <HeadRow>
                <CheckCell $head><CheckBox $flat /></CheckCell>
                <HeadCell $lead>Event Action</HeadCell>
                <HeadCell>Total Events<HelpBadge>?</HelpBadge></HeadCell>
                <HeadCell>
                  Unique Events<HelpBadge>?</HelpBadge>
                  <SortArrow width="11" height="12" viewBox="0 0 11 12">
                    <path d="M5.500 0V10.500M1 6 5.500 10.800 10 6" stroke="#555" strokeWidth="1.800" fill="none" />
                  </SortArrow>
                </HeadCell>
                <HeadCell>Event Value<HelpBadge>?</HelpBadge></HeadCell>
                <HeadCell>Avg. Value<HelpBadge>?</HelpBadge></HeadCell>
              </HeadRow>
              <TotalsRow>
                <TotalCell />
                <TotalCell />
                <TotalCell>
                  <TotalValue>2,487</TotalValue>
                  <TotalNote>% of Total: <b>1.41%</b> <small>(175,936)</small></TotalNote>
                </TotalCell>
                <TotalCell $sorted>
                  <TotalValue>1,455</TotalValue>
                  <TotalNote $ls={0.3}>% of Total: <b>9.44%</b> <small>(15,412)</small></TotalNote>
                </TotalCell>
                <TotalCell>
                  <TotalValue>0</TotalValue>
                  <TotalNote $ls={-0.02}>% of Total: <b>0.00%</b> <small>(0)</small></TotalNote>
                </TotalCell>
                <TotalCell>
                  <TotalValue>0.00</TotalValue>
                  <TotalNote $ls={0.1}>Site Avg: <b>0.00</b> <small>(0.00%)</small></TotalNote>
                </TotalCell>
              </TotalsRow>
              {rows.map(([name, total, unique, ls], i) => (
                <DataRow key={name}>
                  <CheckCell><CheckBox /></CheckCell>
                  <NameCell>
                    <Rank>{i + 1}.</Rank>
                    <EventLink $ls={ls}>{name}</EventLink>
                  </NameCell>
                  <NumCell>{total}</NumCell>
                  <NumCell $sorted>{unique}</NumCell>
                  <NumCell>0</NumCell>
                  <NumCell>0.00</NumCell>
                </DataRow>
              ))}
            </Report>
          </Body>
        </Page>
        <ScrollTrack>
          <TrackSpace $h={156}>
            <svg width="7" height="4" viewBox="0 0 8 4"><path d="M4 0 8 4H0Z" fill="#444" /></svg>
          </TrackSpace>
          <Thumb>
            <svg width="7" height="8" viewBox="0 0 7 8"><path d="M0 .5h7M0 2.800h7M0 5.100h7M0 7.400h7" stroke="#555" /></svg>
          </Thumb>
          <TrackSpace $h={443}>
            <span />
            <Caret color="#444" w={7} />
          </TrackSpace>
        </ScrollTrack>
      </Viewport>

      <Taskbar>
        <TaskSlot $w={40}><WindowsOrb /></TaskSlot>
        <TaskSlot $w={58} $ml={14} $mode="open"><ExplorerIcon /></TaskSlot>
        <TaskSlot $w={58} $ml={4} $mode="open"><FirefoxIcon /></TaskSlot>
        <TaskSlot $w={58} $ml={4} $mode="active"><ChromeIcon /></TaskSlot>
        <TaskSlot $w={58} $ml={4} $mode="open"><XbmcIcon /></TaskSlot>
        <TaskSlot $w={34} $ml={16}><FoxIcon /></TaskSlot>
        <TaskSlot $w={32} $ml={29}><SevenZip /></TaskSlot>
        <TaskSlot $w={53} $ml={17} $lift={4} $mode="open"><PhotoshopIcon /></TaskSlot>
        <TaskSlot $w={4} $ml={1} $mode="open" />
        <TaskSlot $w={28} $ml={19}><GithubIcon /></TaskSlot>
        <TaskSlot $w={58} $ml={19} $mode="open"><SkypeIcon /></TaskSlot>
        <TrayIcons />
        <Clock>11:11 PM<br />6/29/2013</Clock>
        <ShowDesktop />
      </Taskbar>
    </Desktop>
  );
}
